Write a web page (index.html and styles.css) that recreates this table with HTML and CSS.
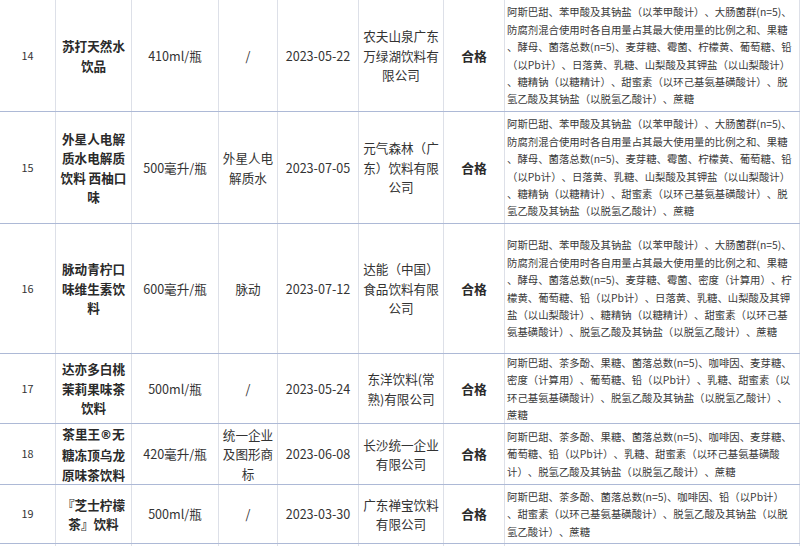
FILE: index.html
```html
<!DOCTYPE html>
<html lang="zh-CN">
<head>
<meta charset="utf-8">
<title>检验结果</title>
<link rel="stylesheet" href="styles.css">
</head>
<body>
<div class="table">
  <div class="row r14">
    <div class="cell num">14</div>
    <div class="cell name">苏打天然水<br>饮品</div>
    <div class="cell">410ml/瓶</div>
    <div class="cell">/</div>
    <div class="cell">2023-05-22</div>
    <div class="cell">农夫山泉广东<br>万绿湖饮料有<br>限公司</div>
    <div class="cell result">合格</div>
    <div class="cell items">阿斯巴甜、苯甲酸及其钠盐（以苯甲酸计）、大肠菌群(n=5)、<br>防腐剂混合使用时各自用量占其最大使用量的比例之和、果糖<br>、酵母、菌落总数(n=5)、麦芽糖、霉菌、柠檬黄、葡萄糖、铅<br>（以Pb计）、日落黄、乳糖、山梨酸及其钾盐（以山梨酸计）<br>、糖精钠（以糖精计）、甜蜜素（以环己基氨基磺酸计）、脱<br>氢乙酸及其钠盐（以脱氢乙酸计）、蔗糖</div>
  </div>
  <div class="row r15">
    <div class="cell num">15</div>
    <div class="cell name">外星人电解<br>质水电解质<br>饮料 西柚口<br>味</div>
    <div class="cell">500毫升/瓶</div>
    <div class="cell">外星人电<br>解质水</div>
    <div class="cell">2023-07-05</div>
    <div class="cell">元气森林（广<br>东）饮料有限<br>公司</div>
    <div class="cell result">合格</div>
    <div class="cell items">阿斯巴甜、苯甲酸及其钠盐（以苯甲酸计）、大肠菌群(n=5)、<br>防腐剂混合使用时各自用量占其最大使用量的比例之和、果糖<br>、酵母、菌落总数(n=5)、麦芽糖、霉菌、柠檬黄、葡萄糖、铅<br>（以Pb计）、日落黄、乳糖、山梨酸及其钾盐（以山梨酸计）<br>、糖精钠（以糖精计）、甜蜜素（以环己基氨基磺酸计）、脱<br>氢乙酸及其钠盐（以脱氢乙酸计）、蔗糖</div>
  </div>
  <div class="row r16">
    <div class="cell num">16</div>
    <div class="cell name">脉动青柠口<br>味维生素饮<br>料</div>
    <div class="cell">600毫升/瓶</div>
    <div class="cell">脉动</div>
    <div class="cell">2023-07-12</div>
    <div class="cell">达能（中国）<br>食品饮料有限<br>公司</div>
    <div class="cell result">合格</div>
    <div class="cell items">阿斯巴甜、苯甲酸及其钠盐（以苯甲酸计）、大肠菌群(n=5)、<br>防腐剂混合使用时各自用量占其最大使用量的比例之和、果糖<br>、酵母、菌落总数(n=5)、麦芽糖、霉菌、密度（计算用）、柠<br>檬黄、葡萄糖、铅（以Pb计）、日落黄、乳糖、山梨酸及其钾<br>盐（以山梨酸计）、糖精钠（以糖精计）、甜蜜素（以环己基<br>氨基磺酸计）、脱氢乙酸及其钠盐（以脱氢乙酸计）、蔗糖</div>
  </div>
  <div class="row r17">
    <div class="cell num">17</div>
    <div class="cell name">达亦多白桃<br>茉莉果味茶<br>饮料</div>
    <div class="cell">500ml/瓶</div>
    <div class="cell">/</div>
    <div class="cell">2023-05-24</div>
    <div class="cell">东洋饮料(常<br>熟)有限公司</div>
    <div class="cell result">合格</div>
    <div class="cell items">阿斯巴甜、茶多酚、果糖、菌落总数(n=5)、咖啡因、麦芽糖、<br>密度（计算用）、葡萄糖、铅（以Pb计）、乳糖、甜蜜素（以<br>环己基氨基磺酸计）、脱氢乙酸及其钠盐（以脱氢乙酸计）、<br>蔗糖</div>
  </div>
  <div class="row r18">
    <div class="cell num">18</div>
    <div class="cell name"><div class="txt">茶里王<span class="reg">®</span>无<br>糖冻顶乌龙<br>原味茶饮料</div></div>
    <div class="cell">420毫升/瓶</div>
    <div class="cell">统一企业<br>及图形商<br>标</div>
    <div class="cell">2023-06-08</div>
    <div class="cell">长沙统一企业<br>有限公司</div>
    <div class="cell result">合格</div>
    <div class="cell items">阿斯巴甜、茶多酚、果糖、菌落总数(n=5)、咖啡因、麦芽糖、<br>葡萄糖、铅（以Pb计）、乳糖、甜蜜素（以环己基氨基磺酸<br>计）、脱氢乙酸及其钠盐（以脱氢乙酸计）、蔗糖</div>
  </div>
  <div class="row r19">
    <div class="cell num">19</div>
    <div class="cell name">『芝士柠檬<br>茶』饮料</div>
    <div class="cell">500ml/瓶</div>
    <div class="cell">/</div>
    <div class="cell">2023-03-30</div>
    <div class="cell">广东禅宝饮料<br>有限公司</div>
    <div class="cell result">合格</div>
    <div class="cell items">阿斯巴甜、茶多酚、菌落总数(n=5)、咖啡因、铅（以Pb计）<br>、甜蜜素（以环己基氨基磺酸计）、脱氢乙酸及其钠盐（以脱<br>氢乙酸计）、蔗糖</div>
  </div>
  <div class="row r20">
    <div class="cell num"></div>
    <div class="cell"></div>
    <div class="cell"></div>
    <div class="cell"></div>
    <div class="cell"></div>
    <div class="cell"></div>
    <div class="cell"></div>
    <div class="cell"></div>
  </div>
</div>
</body>
</html>
```
FILE: styles.css
```css
html, body {
  margin: 0;
  padding: 0;
  background: #ffffff;
}
body {
  width: 800px;
  height: 546px;
  overflow: hidden;
  font-family: "Noto Sans CJK SC", "Microsoft YaHei", sans-serif;
  color: #333333;
  text-spacing-trim: space-all;
}
.table {
  display: flex;
  flex-direction: column;
  width: 800px;
}
.row {
  display: grid;
  grid-template-columns: 56px 76px 87px 59px 81px 85px 61px 295px;
  border-bottom: 1px solid #adb9d6;
  box-sizing: border-box;
}
.r14 { height: 112px; }
.r15 { height: 112px; }
.r16 { height: 130px; }
.r17 { height: 70px; }
.r18 { height: 61px; }
.r19 { height: 59px; }
.r20 { height: 2px; border-bottom: none; }
.cell {
  box-sizing: border-box;
  border-right: 1px solid #dde0e8;
  display: flex;
  align-items: center;
  justify-content: center;
  text-align: center;
  font-size: 12.6px;
  line-height: 19.5px;
  white-space: nowrap;
  overflow: hidden;
}
.num {
  font-size: 10.8px;
}
.name {
  font-weight: bold;
  color: #2a2a2a;
}
.txt {
  text-align: center;
}
.reg {
  font-family: "DejaVu Sans", sans-serif;
  font-size: 12px;
}
.result {
  font-weight: bold;
  font-size: 12.8px;
  color: #2a2a2a;
}
.items {
  justify-content: flex-start;
  text-align: left;
  font-size: 10.4px;
  line-height: 17.4px;
  padding-left: 2px;
  color: #3a3a3a;
}
```
